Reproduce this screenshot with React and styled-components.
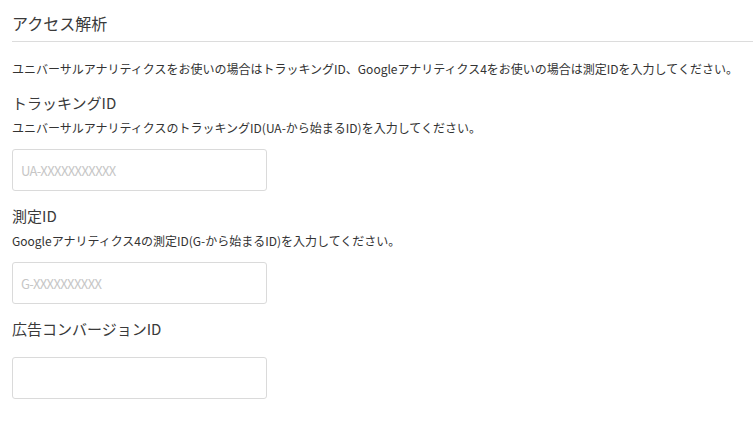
import React from "react";
import styled, { createGlobalStyle } from "styled-components";

const GlobalStyle = createGlobalStyle`
  html, body {
    margin: 0;
    padding: 0;
    background: #fff;
  }
  body {
    font-family: "Noto Sans CJK JP", "Noto Sans", sans-serif;
    color: #333;
  }
  * { box-sizing: border-box; }
`;

const Page = styled.div`
  padding: 11px 0 0 12px;
`;

const Title = styled.h2`
  margin: 0;
  font-size: 16px;
  font-weight: 400;
  line-height: 24px;
  color: #3a3a3a;
  padding-bottom: 6px;
  border-bottom: 1px solid #dcdcdc;
`;

const Lead = styled.p`
  margin: 18px 0 0;
  font-size: 12px;
  line-height: 18px;
  color: #333;
  white-space: nowrap;
`;

const Field = styled.div`
  display: flex;
  flex-direction: column;
  align-items: flex-start;
  margin-top: ${(p) => p.$top}px;
`;

const Label = styled.label`
  font-size: 15px;
  line-height: 22px;
  color: #3a3a3a;
`;

const Help = styled.p`
  margin: 5px 0 0;
  font-size: 12px;
  line-height: 18px;
  color: #333;
`;

const Input = styled.input`
  margin-top: ${(p) => p.$gap}px;
  width: 255px;
  height: 42px;
  padding: 0 8px;
  border: 1px solid #dadada;
  border-radius: 3px;
  font-family: "Noto Sans CJK JP", "Noto Sans", sans-serif;
  font-size: 13px;
  color: #333;
  background: #fff;
  outline: none;
  &::placeholder {
    color: #c6c6c6;
    letter-spacing: -0.6px;
  }
`;

const fields = [
  {
    label: "トラッキングID",
    help: "ユニバーサルアナリティクスのトラッキングID(UA-から始まるID)を入力してください。",
    placeholder: "UA-XXXXXXXXXXX",
    top: 14,
  },
  {
    label: "測定ID",
    help: "Googleアナリティクス4の測定ID(G-から始まるID)を入力してください。",
    placeholder: "G-XXXXXXXXXX",
    top: 14,
  },
  {
    label: "広告コンバージョンID",
    help: null,
    placeholder: "",
    top: 14,
  },
];

export default function App() {
  return (
    <>
      <GlobalStyle />
      <Page>
        <Title>アクセス解析</Title>
        <Lead>
          ユニバーサルアナリティクスをお使いの場合はトラッキングID、Googleアナリティクス4をお使いの場合は測定IDを入力してください。
        </Lead>
        {fields.map((f) => (
          <Field key={f.label} $top={f.top}>
            <Label>{f.label}</Label>
            {f.help && <Help>{f.help}</Help>}
            <Input
              type="text"
              placeholder={f.placeholder}
              $gap={f.help ? 12 : 17}
            />
          </Field>
        ))}
      </Page>
    </>
  );
}
